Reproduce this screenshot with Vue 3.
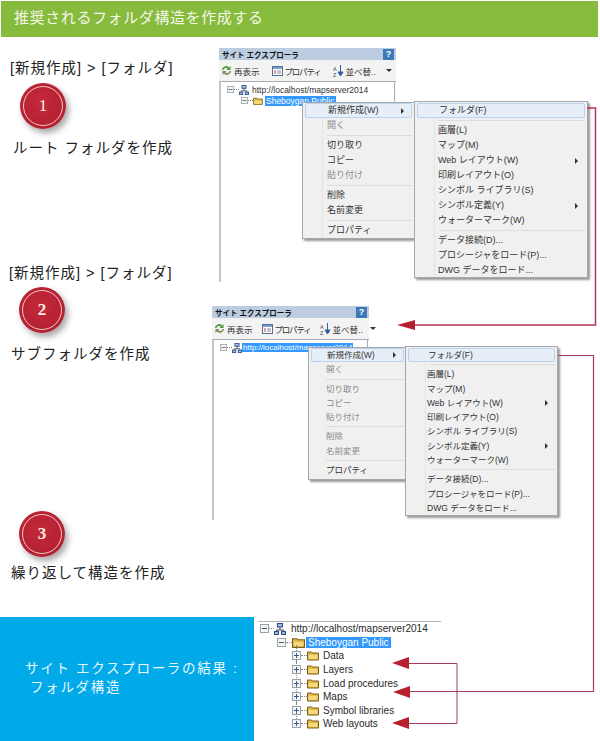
<script setup>
const menuOne = [
  { label: '新規作成(W)', hot: true, arrow: true },
  { label: '開く', off: true },
  { sep: true },
  { label: '切り取り' },
  { label: 'コピー' },
  { label: '貼り付け', off: true },
  { sep: true },
  { label: '削除' },
  { label: '名前変更' },
  { sep: true },
  { label: 'プロパティ' },
];

const menuTwo = [
  { label: '新規作成(W)', hot: true, arrow: true },
  { label: '開く', off: true },
  { sep: true },
  { label: '切り取り', off: true },
  { label: 'コピー', off: true },
  { label: '貼り付け', off: true },
  { sep: true },
  { label: '削除', off: true },
  { label: '名前変更', off: true },
  { sep: true },
  { label: 'プロパティ' },
];

const subMenu = [
  { label: 'フォルダ(F)', hot: true },
  { sep: true },
  { label: '画層(L)' },
  { label: 'マップ(M)' },
  { label: 'Web レイアウト(W)', arrow: true },
  { label: '印刷レイアウト(O)' },
  { label: 'シンボル ライブラリ(S)' },
  { label: 'シンボル定義(Y)', arrow: true },
  { label: 'ウォーターマーク(W)' },
  { sep: true },
  { label: 'データ接続(D)...' },
  { label: 'プロシージャをロード(P)...' },
  { label: 'DWG データをロード...' },
];

const windows = [
  { id: 'one', menu: menuOne, tree: true },
  { id: 'two', menu: menuTwo, tree: false },
];

const folders = ['Data', 'Layers', 'Load procedures', 'Maps', 'Symbol libraries', 'Web layouts'];
</script>

<template>
  <div class="page">
    <svg class="defs" width="0" height="0">
      <defs>
        <symbol id="folder" viewBox="0 0 12 10">
          <path d="M.5 9.500V1.500h4l1 1h6v7z" fill="#e3b94a" stroke="#7d5f14" />
          <path d="M1.500 4.500h9v4h-9z" fill="#f5d97f" />
        </symbol>
        <symbol id="server" viewBox="0 0 12 12">
          <path d="M6 4v3M2.500 9V7h7v2" fill="none" stroke="#345" />
          <rect x="3.500" y=".5" width="5" height="3.500" fill="#9db8dc" stroke="#2d4f86" />
          <rect x=".5" y="8.500" width="4" height="3" fill="#9db8dc" stroke="#2d4f86" />
          <rect x="7.500" y="8.500" width="4" height="3" fill="#9db8dc" stroke="#2d4f86" />
        </symbol>
        <symbol id="minus" viewBox="0 0 9 9">
          <rect x=".5" y=".5" width="8" height="8" fill="#f4f4f4" stroke="#97a3ad" />
          <path d="M2 4.500h5" stroke="#555" />
        </symbol>
        <symbol id="plus" viewBox="0 0 9 9">
          <rect x=".5" y=".5" width="8" height="8" fill="#f4f4f4" stroke="#97a3ad" />
          <path d="M2 4.500h5M4.500 2v5" stroke="#3a5a90" />
        </symbol>
      </defs>
    </svg>

    <header class="banner">推奨されるフォルダ構造を作成する</header>

    <main class="steps">
      <div class="notes">
        <section class="note note-one">
          <p class="path">[新規作成] &gt; [フォルダ]</p>
          <div class="badge"><span>1</span></div>
          <p class="caption">ルート フォルダを作成</p>
        </section>
        <section class="note note-two">
          <p class="path">[新規作成] &gt; [フォルダ]</p>
          <div class="badge"><span>2</span></div>
          <p class="caption">サブフォルダを作成</p>
        </section>
        <section class="note note-three">
          <div class="badge"><span>3</span></div>
          <p class="caption">繰り返して構造を作成</p>
        </section>
      </div>

      <div class="shots">
        <div v-for="win in windows" :key="win.id" class="explorer" :class="win.id">
          <div class="titlebar">
            <b>サイト エクスプローラ</b>
            <i class="help">?</i>
          </div>
          <div class="toolbar">
            <span class="tool">
              <svg width="11" height="11" viewBox="0 0 11 11">
                <path d="M1 5a4 4 0 0 1 7-2.500L9.500 1v4h-4l1.300-1.300A2.500 2.500 0 0 0 2.500 5z" fill="#4c9a3c" />
                <path d="M10 6a4 4 0 0 1-7 2.500L1.500 10V6h4L4.200 7.300A2.500 2.500 0 0 0 8.500 6z" fill="#7d8f5a" />
              </svg>
              再表示
            </span>
            <span class="tool narrow">
              <svg width="11" height="10" viewBox="0 0 11 10">
                <rect x=".5" y=".5" width="10" height="9" fill="#fff" stroke="#54719c" />
                <path d="M1 1h9v2H1z" fill="#7f9fc9" />
                <path d="M2 5h2M2 7h2" stroke="#c2453c" />
                <path d="M5 5h4M5 7h4" stroke="#7f8b9a" />
              </svg>
              プロパティ
            </span>
            <span class="tool">
              <svg width="11" height="12" viewBox="0 0 11 12">
                <text x="0" y="5.500" font-size="5.500" fill="#445" font-family="Liberation Sans, sans-serif">A</text>
                <text x="0" y="11.500" font-size="5.500" fill="#445" font-family="Liberation Sans, sans-serif">Z</text>
                <path d="M7.500 0v8M5 7l2.500 4L10 7z" stroke="#2f5f9e" fill="#2f5f9e" />
              </svg>
              並べ替..
            </span>
            <span class="caret"></span>
          </div>
          <div class="tree">
            <div class="node">
              <svg class="box" width="7" height="7"><use href="#minus" /></svg>
              <i class="dash"></i>
              <svg width="10" height="10"><use href="#server" /></svg>
              <span :class="{ picked: !win.tree }">http://localhost/mapserver2014</span>
            </div>
            <div v-if="win.tree" class="node inner">
              <svg class="box" width="7" height="7"><use href="#minus" /></svg>
              <i class="dash"></i>
              <svg width="10" height="8"><use href="#folder" /></svg>
              <span class="picked">Sheboygan Public</span>
            </div>
          </div>

          <ul class="menu main-menu">
            <template v-for="(item, i) in win.menu" :key="i">
              <li v-if="item.sep" class="sep"></li>
              <li v-else class="item" :class="{ hot: item.hot, off: item.off }">
                {{ item.label }}<i v-if="item.arrow" class="more"></i>
              </li>
            </template>
          </ul>
          <ul class="menu sub-menu">
            <template v-for="(item, i) in subMenu" :key="i">
              <li v-if="item.sep" class="sep"></li>
              <li v-else class="item" :class="{ hot: item.hot }">
                {{ item.label }}<i v-if="item.arrow" class="more"></i>
              </li>
            </template>
          </ul>
        </div>
      </div>
    </main>

    <footer class="result">
      <div class="result-text">
        <p>サイト エクスプローラの結果 :</p>
        <p class="second">フォルダ構造</p>
      </div>
      <div class="final-tree">
        <div class="row">
          <svg class="box" width="9" height="9"><use href="#minus" /></svg>
          <i class="dash"></i>
          <svg width="12" height="12"><use href="#server" /></svg>
          <span>http://localhost/mapserver2014</span>
        </div>
        <div class="row level-one">
          <svg class="box" width="9" height="9"><use href="#minus" /></svg>
          <i class="dash"></i>
          <svg width="13" height="11"><use href="#folder" /></svg>
          <span class="picked">Sheboygan Public</span>
        </div>
        <div v-for="name in folders" :key="name" class="row level-two">
          <svg class="box" width="9" height="9"><use href="#plus" /></svg>
          <i class="dash"></i>
          <svg width="12" height="11"><use href="#folder" /></svg>
          <span>{{ name }}</span>
        </div>
      </div>
    </footer>

    <svg class="links" width="600" height="741" viewBox="0 0 600 741">
      <path d="M587 108H595.500V325H412" fill="none" stroke="#b8344d" stroke-width="1.500" />
      <path d="M397 325l18-5v10z" fill="#b8202f" />
      <path d="M558 355.500H593.500V691.500H408" fill="none" stroke="#a23c58" stroke-width="1.200" />
      <path d="M408 663.500H457V723.500H408" fill="none" stroke="#a23c58" stroke-width="1" />
      <path d="M392 663l17-6v12zM393 692l17-6v12zM392 723l17-6v12z" fill="#b8202f" />
    </svg>
  </div>
</template>

<style>
html,
body {
  margin: 0;
  background: #fff;
}
</style>

<style scoped>
.page {
  position: relative;
  width: 600px;
  height: 741px;
  overflow: hidden;
  background: #fff;
  font-family: "Liberation Sans", "Noto Sans CJK JP", sans-serif;
  color: #222;
}

.defs {
  position: absolute;
}

.banner {
  box-sizing: border-box;
  height: 36px;
  margin: 1px 2px 0 1px;
  padding-left: 13px;
  line-height: 34px;
  background: #87bb3d;
  color: #f4f8e8;
  font-size: 15px;
  letter-spacing: 0.6px;
}

.steps {
  display: flex;
  height: 580px;
}

.notes {
  width: 212px;
  flex: none;
}

.note p {
  margin: 0;
}

.path,
.caption {
  font-size: 14.500px;
  line-height: 20px;
  letter-spacing: 1px;
  white-space: nowrap;
}

.note-one {
  padding: 21px 0 0 10px;
}

.note-two {
  margin-top: 105px;
  padding-left: 9px;
}

.note-three {
  margin-top: 147px;
  padding-left: 9px;
}

.badge {
  display: flex;
  align-items: center;
  justify-content: center;
  box-sizing: border-box;
  width: 46px;
  height: 46px;
  margin: 5px 0 9px 10px;
  border-radius: 50%;
  background: radial-gradient(circle at 45% 40%, #c4293a, #ac1c2e);
  box-shadow: 3px 4px 6px rgba(0, 0, 0, 0.35);
}

.badge span {
  display: flex;
  align-items: center;
  justify-content: center;
  box-sizing: border-box;
  width: 40px;
  height: 40px;
  border: 1px solid #f2c9c4;
  border-radius: 50%;
  color: #fbeee6;
  font-family: "Liberation Serif", serif;
  font-size: 17px;
  font-weight: bold;
}

.note-one .badge span {
  font-weight: normal;
}

.note-two .badge {
  margin: 4px 0 11px 10px;
}

.note-three .badge {
  margin: 0 0 6px 10px;
}

.note-one .caption {
  margin-left: 3px;
}

.note-two .caption,
.note-three .caption {
  margin-left: 2px;
}

.shots {
  padding-top: 11px;
}

.explorer {
  position: relative;
  box-sizing: border-box;
  font-size: 8.500px;
}

.explorer.one {
  width: 177px;
  height: 234px;
  margin-left: 7px;
}

.explorer.two {
  width: 157px;
  height: 214px;
  margin-top: 24px;
}

.titlebar {
  display: flex;
  align-items: center;
  justify-content: space-between;
  height: 12px;
  padding: 0 2px 0 3px;
  background: #bccde2;
  font-size: 7.500px;
  color: #111;
}

.help {
  width: 11px;
  height: 11px;
  background: #3d78b8;
  color: #fff;
  font: bold 9px/11px "Liberation Sans", sans-serif;
  text-align: center;
}

.toolbar {
  display: flex;
  align-items: center;
  gap: 12px;
  height: 21px;
  padding-left: 2px;
  background: #f3f3f3;
  color: #333;
}

.two .toolbar {
  gap: 9px;
}

.tool {
  display: flex;
  align-items: center;
  gap: 2px;
  white-space: nowrap;
}

.narrow {
  letter-spacing: -1.200px;
}

.caret {
  width: 0;
  height: 0;
  margin-left: -2px;
  border: 3px solid transparent;
  border-top: 3px solid #333;
  border-bottom: 0;
}

.tree {
  position: relative;
  box-sizing: border-box;
  height: calc(100% - 33px);
  padding: 2px 0 0 6px;
  border-top: 1px solid #a8adb3;
  border-left: 2px solid #c4c6ca;
  font-size: 8.500px;
  color: #333;
}

.tree::after {
  content: '';
  position: absolute;
  top: 0;
  right: 1px;
  height: 22px;
  border-right: 1px solid #a8adb3;
}

.two .tree {
  font-size: 8px;
}

.node {
  display: flex;
  align-items: center;
  height: 11px;
  white-space: nowrap;
}

.node svg {
  flex: none;
}

.node span {
  margin-left: 2px;
  padding: 0 1px;
}

.two .node span {
  margin-left: 0;
}

.inner {
  margin-left: 14px;
}

.dash {
  width: 5px;
  border-top: 1px dotted #888;
}

.picked {
  background: #3399ff;
  color: #fff;
}

.menu {
  position: absolute;
  z-index: 1;
  box-sizing: border-box;
  margin: 0;
  padding: 0 2px;
  list-style: none;
  border: 1px solid #a5a7aa;
  background: linear-gradient(90deg, #f0f0f0 19px, #e4e4e4 19px, #e4e4e4 20px, #f0f0f0 20px);
  box-shadow: 2px 2px 2px rgba(70, 70, 70, 0.55);
  color: #333;
  font-size: 9px;
}

.sub-menu {
  padding-top: 1px;
}

.item {
  position: relative;
  height: 15px;
  padding-left: 22px;
  line-height: 15px;
  white-space: nowrap;
}

.sep {
  height: 1px;
  margin: 2px 0 2px 22px;
  background: #dcdcdc;
}

.hot {
  box-sizing: border-box;
  border: 1px solid #b9d2ee;
  border-radius: 2px;
  background: #e6eef7;
  line-height: 13px;
}

.off {
  color: #8b8b8b;
}

.more {
  position: absolute;
  top: 50%;
  right: 7px;
  margin-top: -3px;
  border: 3px solid transparent;
  border-left: 3px solid #333;
  border-right: 0;
}

.one .main-menu {
  top: 54px;
  left: 83px;
  width: 113px;
  height: 137px;
}

.one .sub-menu {
  top: 53px;
  left: 195px;
  width: 174px;
  height: 177px;
}

.one .sub-menu .item {
  padding-left: 21px;
}

.two .main-menu {
  top: 41px;
  left: 96px;
  width: 99px;
  height: 133px;
  background: #f0f0f0;
}

.two .sub-menu {
  top: 40px;
  left: 193px;
  width: 153px;
  height: 170px;
}

.two .item {
  height: 14.300px;
  line-height: 14.300px;
  font-size: 8.500px;
}

.two .main-menu .item {
  padding-left: 15px;
}

.two .main-menu .sep {
  margin-left: 15px;
}

.two .sub-menu .item {
  padding-left: 19px;
}

.two .hot {
  line-height: 12.300px;
}

.result {
  display: flex;
  height: 124px;
}

.result-text {
  box-sizing: border-box;
  width: 254px;
  margin-right: 4px;
  padding: 42px 0 0 25px;
  background: #00a9e8;
  color: #e8f7fd;
  font-size: 13.500px;
  letter-spacing: 1.700px;
  line-height: 19px;
}

.result-text p {
  margin: 0;
  white-space: nowrap;
}

.result-text .second {
  margin-left: 5px;
}

.final-tree {
  box-sizing: border-box;
  width: 183px;
  height: 110px;
  margin-top: 4px;
  padding: 0 0 0 2px;
  border-top: 1px solid #b5b5b5;
  font-family: "Liberation Sans", sans-serif;
  font-size: 10px;
  color: #2a2a2a;
}

.row {
  position: relative;
  display: flex;
  align-items: center;
  height: 13.600px;
  white-space: nowrap;
}

.row svg {
  position: relative;
  flex: none;
}

.row .dash {
  width: 6px;
}

.row:first-child .dash {
  width: 5px;
}

.row:first-child span {
  margin-left: 3px;
}

.row span {
  margin-left: 1px;
  padding: 0 2px;
}

.level-one {
  margin-left: 17px;
}

.level-two {
  margin-left: 32px;
}

.level-two::before {
  content: '';
  position: absolute;
  top: -4px;
  bottom: 0;
  left: 4px;
  border-left: 1px dotted #888;
}

.level-two:last-child::before {
  bottom: 6px;
}

.level-two span {
  margin-left: 2px;
}

.links {
  position: absolute;
  z-index: 2;
  top: 0;
  left: 0;
  pointer-events: none;
}
</style>
